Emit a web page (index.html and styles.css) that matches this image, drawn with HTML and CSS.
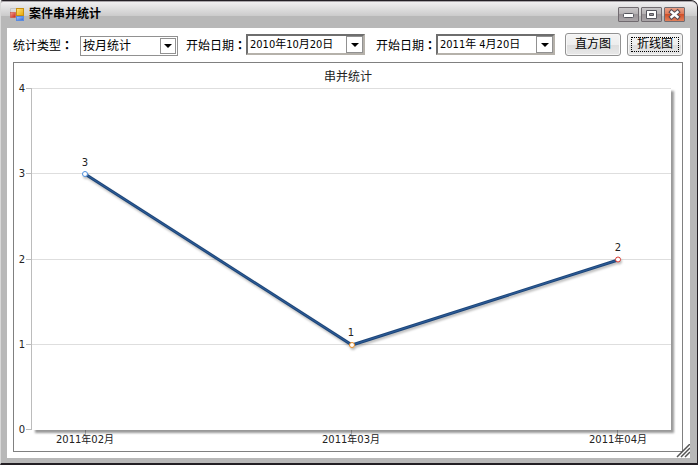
FILE: index.html
```html
<!DOCTYPE html>
<html lang="zh-CN">
<head>
<meta charset="utf-8">
<title>案件串并统计</title>
<link rel="stylesheet" href="styles.css">
</head>
<body>
<main class="window">
  <header class="titlebar">
    <svg class="app-icon" width="16" height="16" viewBox="0 0 16 16" aria-hidden="true">
      <defs>
        <linearGradient id="gy" x1="0" y1="0" x2="1" y2="1"><stop offset="0" stop-color="#ffe680"/><stop offset="1" stop-color="#e8a400"/></linearGradient>
        <linearGradient id="gr" x1="0" y1="0" x2="1" y2="1"><stop offset="0" stop-color="#f5a08c"/><stop offset="1" stop-color="#c81e14"/></linearGradient>
        <linearGradient id="gb" x1="0" y1="0" x2="1" y2="1"><stop offset="0" stop-color="#a8ccff"/><stop offset="1" stop-color="#2a62d8"/></linearGradient>
      </defs>
      <path d="M1.500 6V2.500H7" fill="none" stroke="#c4c4c4"/>
      <rect x="7.500" y="2.500" width="7" height="7" fill="url(#gy)" stroke="#c98f10"/>
      <rect x="1.500" y="6.500" width="5" height="5" fill="url(#gr)" stroke="#d05040" stroke-width=".6"/>
      <rect x="7.500" y="10.500" width="7" height="4" fill="url(#gb)" stroke="#5a8be0"/>
    </svg>
    <h1 class="title">案件串并统计</h1>
    <div class="controls">
      <button class="control" type="button" aria-label="最小化"><svg width="19" height="13" viewBox="0 0 19 13"><rect x="4.500" y="5.500" width="10" height="4" rx="1" fill="#fff" stroke="#56565e"/></svg></button>
      <button class="control" type="button" aria-label="最大化"><svg width="19" height="13" viewBox="0 0 19 13"><path fill="#fff" fill-rule="evenodd" stroke="#56565e" d="M4.500 2.500h10v8h-10zM7.500 5.500v2h4v-2z"/></svg></button>
      <button class="control close" type="button" aria-label="关闭"><svg width="19" height="13" viewBox="0 0 19 13"><path d="M6.500 4l6 5M12.500 4l-6 5" stroke="#5a4c54" stroke-width="4.500" stroke-linecap="square"/><path d="M6.500 4l6 5M12.500 4l-6 5" stroke="#fff" stroke-width="2.400" stroke-linecap="square"/></svg></button>
    </div>
  </header>
  <div class="content">
    <form class="toolbar">
      <label class="label" for="kind">统计类型<span class="colon" lang="zh-TW">&#xFF1A;</span></label>
      <div class="field kind">
        <select id="kind" class="value"><option>按月统计</option></select>
        <span class="arrow"></span>
      </div>
      <label class="label" for="from">开始日期<span class="colon" lang="zh-TW">&#xFF1A;</span></label>
      <div class="field date from">
        <input id="from" class="value" type="text" value="2010年10月20日">
        <button class="arrow" type="button" aria-label="选择日期"></button>
      </div>
      <label class="label" for="to">开始日期<span class="colon" lang="zh-TW">&#xFF1A;</span></label>
      <div class="field date">
        <input id="to" class="value" type="text" value="2011年 4月20日">
        <button class="arrow" type="button" aria-label="选择日期"></button>
      </div>
      <div class="actions">
        <button class="action" type="button">直方图</button>
        <button class="action focused" type="button">折线图</button>
      </div>
    </form>
    <section class="panel">
      <svg class="chart" viewBox="14 63 668 388" role="img" aria-label="串并统计">
        <text class="chart-title" x="348" y="81">串并统计</text>
        <path class="axis" d="M85.500 430v9M351.500 430v9M617.500 430v9"/>
        <rect class="plot" x="32" y="88" width="639" height="342"/>
        <path class="grid" d="M32 88.500H671M32 173.500H671M32 259.500H671M32 344.500H671"/>
        <path class="axis" d="M31.500 88V430M26 88.500h6M26 173.500h6M26 259.500h6M26 344.500h6M26 429.500h6"/>
        <g class="tick-label">
          <text x="22" y="92">4</text><text x="22" y="177">3</text><text x="22" y="263">2</text><text x="22" y="348">1</text><text x="22" y="433">0</text>
          <text x="85" y="443">2011年02月</text><text x="351" y="443">2011年03月</text><text x="618" y="443">2011年04月</text>
          <text x="85" y="166">3</text><text x="351" y="336">1</text><text x="618" y="251">2</text>
        </g>
        <g class="series">
          <polyline class="line" points="85,174 352,345 618,260"/>
          <polyline class="line-core" points="85,174 352,345 618,260"/>
          <circle class="mark blue" cx="85" cy="174" r="2.500"/>
          <circle class="mark orange" cx="352" cy="345" r="2.500"/>
          <circle class="mark red" cx="618" cy="259.500" r="2.500"/>
        </g>
      </svg>
    </section>
    <svg class="grip" width="14" height="14" viewBox="0 0 14 14" aria-hidden="true"><path d="M1 13L14 0M5 13L14 4M9 13L14 8" stroke="#555" stroke-width="1.500"/></svg>
  </div>
</main>
</body>
</html>
```
FILE: styles.css
```css
* { box-sizing: border-box; }

body {
  margin: 0;
  padding: 0 1px 1px 0;
  height: 100vh;
  background: #fff;
  color: #000;
  font: 12px/16px "Liberation Sans", "Noto Sans CJK SC", sans-serif;
}

button, input, select { font: inherit; color: inherit; }

.window {
  display: flex;
  flex-direction: column;
  height: 100%;
  padding: 0 7px 5px 6px;
  background: #b8b8b8;
  border: 1px solid #231f24;
  border-bottom-width: 2px;
  border-left-color: #d8d8d8;
  border-radius: 3px 7px 0 0;
}

.titlebar {
  display: flex;
  align-items: center;
  height: 27px;
  margin: 0 -7px 0 -6px;
  padding: 0 12px 2px 8px;
  border-top: 1px solid #a9a5a9;
  border-radius: 2px 6px 0 0;
  background: linear-gradient(#f0eff0 0, #cbcbcb 14px, #b8b8b8 14px);
}

.title { margin: 0 0 0 4px; font-size: 12px; line-height: 16px; }

.controls { display: flex; gap: 2px; margin-left: auto; padding-top: 1px; }

.control {
  display: flex;
  width: 21px;
  height: 15px;
  padding: 0;
  border: 1px solid #716b70;
  border-radius: 1px;
  background: linear-gradient(#c9c6c8 0, #b5b1b3 6px, #989396 6px, #aaa5a8);
}

.control.close { background: linear-gradient(#e9a087 0, #df7956 6px, #cf4c26 6px, #e2805a); }

.content {
  position: relative;
  display: flex;
  flex: 1;
  flex-direction: column;
  min-height: 0;
  padding: 5px 7px 6px 6px;
  background: #fff;
}

.toolbar { display: flex; align-items: center; height: 23px; margin-bottom: 6px; }

.label { flex: none; width: 60px; padding-top: 2px; white-space: nowrap; }
.colon { font-family: "Noto Sans CJK TC", sans-serif; font-weight: bold; }

.field {
  display: flex;
  flex: none;
  height: 20px;
  border: 1px solid #919191;
  background: #fff;
}

.kind { width: 98px; margin: 2px 8px 0 7px; }

.date {
  width: 119px;
  height: 21px;
  border: 2px solid;
  border-color: #6e6e6e #b5b1aa #b5b1aa #6e6e6e;
  font-family: "DejaVu Sans Condensed", "Noto Sans CJK SC", sans-serif;
  font-size: 11px;
}

.from { margin-right: 11px; }

.value {
  flex: 1;
  min-width: 0;
  padding: 0 0 0 2px;
  border: 0;
  outline: 0;
  appearance: none;
  background: transparent;
}

.arrow {
  display: flex;
  align-items: center;
  justify-content: center;
  width: 17px;
  padding: 0;
  border: 1px solid #919191;
  background: #fff;
}

.kind .arrow { margin: 1px; width: 16px; pointer-events: none; }

.arrow::after {
  content: "";
  border: 4px solid transparent;
  border-top-color: #000;
  border-bottom: 0;
}

.actions { display: flex; gap: 6px; margin-left: auto; }

.action {
  width: 56px;
  height: 23px;
  padding: 0 0 2px;
  border: 1px solid #929292;
  border-radius: 3px;
  background: linear-gradient(#f4f4f4 0, #ededed 11px, #dddddd 11px, #e8e8e8);
  box-shadow: inset 0 0 0 1px #f7f7f7;
}

.action.focused { outline: 1px dotted #000; outline-offset: -5px; }

.panel {
  flex: 1;
  min-height: 0;
  border: 1px solid #808080;
}

.chart { display: block; width: 100%; height: 100%; }

.chart text { text-anchor: middle; fill: #222; }
.chart .chart-title { font-size: 12px; }
.tick-label { font-family: "DejaVu Sans", "Noto Sans CJK SC", sans-serif; font-size: 10px; }
.plot { fill: #fff; filter: drop-shadow(3px 3px 1px #0006); }
.grid { stroke: #dedede; }
.axis { stroke: #bcbcbc; }
.series { filter: drop-shadow(1px 2px 1px #0004); }
.line { fill: none; stroke: #1e477a; stroke-width: 3; }
.line-core { fill: none; stroke: #2e5d9a; stroke-width: 1; }
.mark { fill: #fff; stroke-width: 1; }
.blue { stroke: #4f8fdc; }
.orange { stroke: #e88a20; }
.red { stroke: #d93a32; }

.grip { position: absolute; right: 0; bottom: 0; }
```
